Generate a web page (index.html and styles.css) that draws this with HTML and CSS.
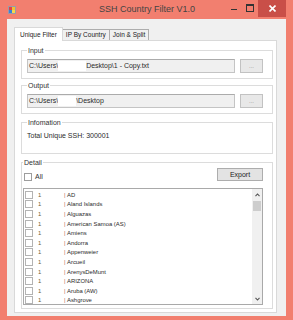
FILE: index.html
```html
<!DOCTYPE html>
<html lang="en">
<head>
  <meta charset="UTF-8">
  <title>SSH Country Filter V1.0</title>
  <link rel="stylesheet" href="styles.css">
</head>
<body>
  <div class="window">
    <!-- Title bar -->
    <div class="titlebar">
      <div class="tb-left">
        <svg class="app-icon" width="8" height="8" viewBox="0 0 8 8">
          <rect x="0" y="0" width="8" height="8" fill="#9a9aa8"/>
          <rect x="1" y="1" width="3" height="3" fill="#e0404a"/>
          <rect x="4" y="1" width="3" height="3" fill="#f2c230"/>
          <rect x="1" y="4" width="3" height="3" fill="#3c7fd8"/>
          <rect x="4" y="4" width="3" height="3" fill="#f5d84a"/>
        </svg>
      </div>
      <div class="title">SSH Country Filter V1.0</div>
      <div class="tb-right">
        <span class="ctl"><span class="min-dash"></span></span>
        <span class="ctl"><span class="max-box"></span></span>
        <span class="ctl ctl-close">
          <svg width="7" height="7" viewBox="0 0 7 7"><path d="M0.5 0.5 L6.5 6.5 M6.5 0.5 L0.5 6.5" stroke="#fff" stroke-width="1.6"/></svg>
        </span>
      </div>
    </div>

    <div class="client">
      <div class="tabs">
        <div class="tab active">Unique Filter</div>
        <div class="tab">IP By Country</div>
        <div class="tab">Join &amp; Split</div>
      </div>

      <div class="panel">
        <fieldset class="group">
          <legend>Input</legend>
          <div class="path-row">
            <div class="textbox">C:\Users\<span class="blot in-blot"></span>Desktop\1 - Copy.txt</div>
            <button class="browse">...</button>
          </div>
        </fieldset>

        <fieldset class="group group-out">
          <legend>Output</legend>
          <div class="path-row">
            <div class="textbox">C:\Users\<span class="blot out-blot"></span>\Desktop</div>
            <button class="browse">...</button>
          </div>
        </fieldset>

        <fieldset class="group group-info">
          <legend>Infomation</legend>
          <div class="info-text">Total Unique SSH: 300001</div>
        </fieldset>

        <fieldset class="group group-detail">
          <legend>Detail</legend>
          <div class="detail-head">
            <label class="check-all"><span class="cb"></span>All</label>
            <button class="export-btn">Export</button>
          </div>
          <div class="listbox">
            <div class="items" id="items"></div>
            <div class="vscroll">
              <div class="arrow">
                <svg width="5" height="4" viewBox="0 0 5 4"><path d="M0.5 3.2 L2.5 1 L4.5 3.2" fill="none" stroke="#555" stroke-width="1.1"/></svg>
              </div>
              <div class="thumb"></div>
              <div class="track"></div>
              <div class="arrow">
                <svg width="5" height="4" viewBox="0 0 5 4"><path d="M0.5 0.8 L2.5 3 L4.5 0.8" fill="none" stroke="#555" stroke-width="1.1"/></svg>
              </div>
            </div>
          </div>
        </fieldset>
      </div>
    </div>
  </div>

  <script>
    const places = ["AD", "Aland Islands", "Alguazas", "American Samoa (AS)", "Amiens", "Andorra",
      "Appenweier", "Arcueil", "ArenysDeMunt", "ARIZONA", "Aruba (AW)", "Ashgrove"];

    const list = document.getElementById("items");
    places.forEach(name => {
      const row = document.createElement("div");
      row.className = "row";
      row.innerHTML = '<span class="cb"></span><span class="num">1</span><span class="sep">|</span><span class="name"></span>';
      row.querySelector(".name").textContent = name;
      list.appendChild(row);
    });
  </script>
</body>
</html>
```

FILE: styles.css
```css
body {
  margin: 0;
  background: #f27f6f;
  font-family: "Liberation Sans", Arial, sans-serif;
  color: #333;
}

.window {
  width: 293px;
  height: 320px;
  display: flex;
  flex-direction: column;
}

/* title bar */
.titlebar {
  height: 19px;
  display: grid;
  grid-template-columns: 1fr auto 1fr;
  padding: 0 7px 0 8px;
}

.tb-left {
  padding-top: 6px;
}

.app-icon {
  display: block;
}

.title {
  font-size: 9px;
  line-height: 19px;
  color: #444;
}

.tb-right {
  display: flex;
  justify-content: flex-end;
  align-items: flex-start;
}

.ctl {
  width: 16px;
  height: 17px;
  display: flex;
  align-items: center;
  justify-content: center;
}

.min-dash {
  width: 6px;
  height: 1px;
  background: #333;
  margin-top: 2px;
}

.max-box {
  width: 6px;
  height: 5px;
  border: 1px solid #333;
  border-top-width: 2px;
  margin-top: -1px;
}

.ctl-close {
  width: 28px;
  background: #c94f48;
}

.ctl-close svg {
  display: block;
}

/* client area */
.client {
  flex: 1;
  margin: 0 7px 4px 7px;
  background: #f0f0f0;
  padding: 8px 9px 3px 7px;
  display: flex;
  flex-direction: column;
}

.tabs {
  height: 13px;
  display: flex;
  align-items: flex-end;
}

.tab {
  height: 11px;
  line-height: 10px;
  font-size: 6.5px;
  padding: 0 3px;
  box-sizing: border-box;
  border: 1px solid #adadad;
  border-bottom: none;
  background: #f0f0f0;
  margin-left: -1px;
  color: #222;
}

.tab.active {
  position: relative;
  z-index: 1;
  height: 14px;
  line-height: 13px;
  margin-bottom: -1px;
  margin-left: 0;
  padding: 0 5px;
  background: #fff;
  border-color: #d9d9d9;
}

.panel {
  height: 273px;
  box-sizing: border-box;
  border: 1px solid #d9d9d9;
  background: #fff;
  padding: 5px 3px 0 6px;
}

/* group boxes */
.group {
  margin: 0;
  min-width: 0;
  border: 1px solid #dcdcdc;
  padding: 4px 9px 5px 5px;
}

.group legend {
  font-size: 7px;
  line-height: 9px;
  padding: 0 1px;
  color: #333;
}

.group-out {
  margin-top: 2px;
}

.group-info {
  margin-top: 4px;
  padding-bottom: 13px;
}

.group-detail {
  margin-top: 4px;
  padding: 1px 9px 3px 1px;
}

.path-row {
  display: flex;
  gap: 5px;
}

.textbox {
  flex: 1;
  height: 14px;
  box-sizing: border-box;
  border: 1px solid #c4c4c4;
  border-top-color: #ababab;
  background: #f0f0f0;
  font-size: 7px;
  line-height: 12px;
  padding: 0 1px;
  white-space: nowrap;
  overflow: hidden;
  color: #2b2b2b;
}

.blot {
  display: inline-block;
  height: 10px;
  vertical-align: middle;
  background: #fff;
}

.in-blot {
  width: 28px;
}

.out-blot {
  width: 18px;
}

.browse {
  width: 23px;
  height: 14px;
  padding: 0;
  border: 1px solid #c2c2c2;
  background: #e8e8e8;
  font-size: 6px;
  line-height: 10px;
  color: #888;
  font-family: inherit;
}

.info-text {
  font-size: 7px;
  line-height: 9px;
  color: #2b2b2b;
}

.detail-head {
  height: 13px;
  display: flex;
  justify-content: space-between;
  align-items: flex-end;
}

.check-all {
  display: flex;
  align-items: center;
  gap: 3px;
  margin-left: 1px;
  font-size: 7px;
  line-height: 8px;
}

.cb {
  width: 8px;
  height: 8px;
  box-sizing: border-box;
  border: 1px solid #9d9d9d;
  background: #fff;
  flex-shrink: 0;
}

.export-btn {
  width: 46px;
  height: 13px;
  padding: 0;
  border: 1px solid #adadad;
  background: #e3e3e3;
  font-family: inherit;
  font-size: 7px;
  color: #222;
  align-self: flex-start;
}

/* list */
.listbox {
  margin-top: 7px;
  height: 117px;
  box-sizing: border-box;
  border: 1px solid #a9a9a9;
  display: flex;
}

.items {
  flex: 1;
  padding-top: 1px;
}

.row {
  height: 9.6px;
  display: flex;
  align-items: center;
  font-size: 5.9px;
  color: #2b2b2b;
}

.row .cb {
  margin-left: 1px;
  border-color: #b3b3b3;
}

.num {
  width: 31px;
  padding-left: 5px;
  box-sizing: border-box;
  color: #6e6232;
}

.sep {
  width: 3px;
  color: #b8644f;
}

.vscroll {
  width: 10px;
  background: #f0f0f0;
  display: flex;
  flex-direction: column;
}

.arrow {
  height: 11px;
  display: flex;
  align-items: center;
  justify-content: center;
}

.arrow svg {
  display: block;
}

.thumb {
  height: 10px;
  margin: 1px 1px 0;
  background: #cdcdcd;
}

.track {
  flex: 1;
}
```
